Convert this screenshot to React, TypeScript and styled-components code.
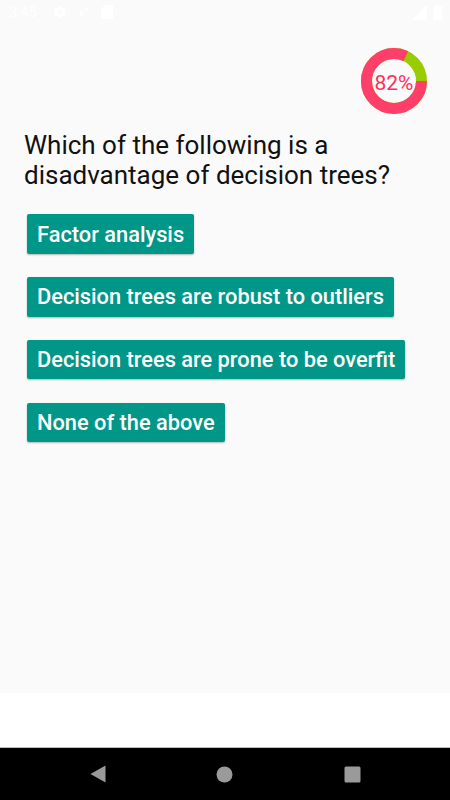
import React from "react";
import styled, { createGlobalStyle } from "styled-components";

const GlobalStyle = createGlobalStyle`
  html, body { margin: 0; padding: 0; }
  body { font-family: Roboto, "Noto Sans", "Liberation Sans", sans-serif; background: #fafafa; }
  * { box-sizing: border-box; }
`;

const Screen = styled.div`
  width: 450px;
  height: 800px;
  display: flex;
  flex-direction: column;
  overflow: hidden;
  background: #fafafa;
`;

const StatusBar = styled.div`
  height: 24px;
  flex: 0 0 24px;
  display: flex;
  align-items: center;
  justify-content: space-between;
  padding: 0 8px 0 9px;
  background: #fafafa;
  color: #ffffff;
`;

const StatusGroup = styled.div<{ $gap: number }>`
  display: flex;
  align-items: center;
  gap: ${(p) => p.$gap}px;
`;

const Time = styled.span`
  font-family: Roboto, "Noto Sans", sans-serif;
  font-size: 14px;
  color: #ffffff;
  margin-right: 6px;
  letter-spacing: 0.2px;
`;

const Content = styled.main`
  flex: 1;
  display: flex;
  flex-direction: column;
  padding: 24px 23px 0 24px;
  background: #fafafa;
`;

const Header = styled.div`
  display: flex;
  justify-content: flex-end;
`;

const Ring = styled.div`
  width: 66px;
  height: 66px;
  display: grid;
  place-items: center;
  & > * { grid-area: 1 / 1; }
`;

const RingLabel = styled.span`
  font-family: Roboto, "Noto Sans", sans-serif;
  font-size: 21px;
  color: #ff2f5c;
  padding-top: 3px;
`;

const Question = styled.h1`
  margin: 16px 0 0 0;
  font-family: Roboto, "Noto Sans", sans-serif;
  font-weight: 400;
  font-size: 26px;
  line-height: 30px;
  color: #111111;
`;

const Options = styled.div`
  display: flex;
  flex-direction: column;
  align-items: flex-start;
  gap: 23.3px;
  margin-top: 24.3px;
  padding-left: 3px;
`;

const OptionButton = styled.button`
  height: 39.5px;
  padding: 0 10px;
  border: none;
  border-radius: 2px;
  background: #009688;
  color: #ffffff;
  font-family: Roboto, "Noto Sans", sans-serif;
  font-weight: 500;
  font-size: 21.8px;
  white-space: nowrap;
  box-shadow: 0 1px 2px rgba(0, 0, 0, 0.28);
  cursor: pointer;
`;

const Spacer = styled.div`
  height: 55px;
  flex: 0 0 55px;
  background: #ffffff;
  border-bottom: 1px solid #bdbdbd;
`;

const NavBar = styled.nav`
  height: 52px;
  flex: 0 0 52px;
  background: #000000;
  display: grid;
  grid-template-columns: repeat(3, 1fr);
  align-items: center;
  justify-items: center;
  padding: 0 34px;
`;

const NavIcon = styled.svg`
  display: block;
`;

const options = [
  "Factor analysis",
  "Decision trees are robust to outliers",
  "Decision trees are prone to be overfit",
  "None of the above",
];

function ProgressRing({ value }: { value: number }) {
  const r = 27.5;
  const c = 2 * Math.PI * r;
  const pink = (value / 100) * c;
  return (
    <Ring>
      <svg width="66" height="66" viewBox="0 0 66 66">
        <circle cx="33" cy="33" r={r} fill="none" stroke="#99cc00" strokeWidth="11" />
        <circle
          cx="33"
          cy="33"
          r={r}
          fill="none"
          stroke="#ff3f69"
          strokeWidth="11"
          strokeDasharray={`${pink} ${c}`}
        />
      </svg>
      <RingLabel>{value}%</RingLabel>
    </Ring>
  );
}

export default function App() {
  return (
    <>
      <GlobalStyle />
      <Screen>
        <StatusBar>
          <StatusGroup $gap={10}>
            <Time>3:45</Time>
            <svg width="14" height="14" viewBox="0 0 24 24" fill="#fff">
              <path d="M19.4 13c.04-.33.06-.66.06-1s-.02-.67-.06-1l2.1-1.65c.2-.15.25-.42.12-.64l-2-3.46c-.12-.22-.39-.3-.61-.22l-2.49 1c-.52-.4-1.08-.73-1.69-.98l-.38-2.65A.49.49 0 0 0 14 2h-4c-.25 0-.46.18-.49.42l-.38 2.65c-.61.25-1.17.59-1.69.98l-2.49-1a.5.5 0 0 0-.61.22l-2 3.46c-.13.22-.07.49.12.64L4.57 11c-.04.33-.07.67-.07 1s.03.67.07 1l-2.11 1.65c-.19.15-.24.42-.12.64l2 3.46c.12.22.39.3.61.22l2.49-1c.52.4 1.08.73 1.69.98l.38 2.65c.03.24.24.42.49.42h4c.25 0 .46-.18.49-.42l.38-2.65c.61-.25 1.17-.59 1.69-.98l2.49 1c.23.09.49 0 .61-.22l2-3.46c.12-.22.07-.49-.12-.64L19.4 13zM12 15.5a3.5 3.5 0 1 1 0-7 3.5 3.5 0 0 1 0 7z" />
            </svg>
            <svg width="14" height="14" viewBox="0 0 24 24" fill="#fff">
              <path d="M9 14.5a3 3 0 1 0 0-.01zM9 9l1 .2.5 1.6 1.4.7 1.5-.6 1 1.4-1 1.2v1.6l1 1.2-1 1.4-1.5-.6-1.4.7-.5 1.6H8l-.5-1.6-1.4-.7-1.5.6-1-1.4 1-1.2v-1.6l-1-1.2 1-1.4 1.5.6 1.4-.7L8 9z" />
              <path d="M13 4h10l-5 6z" />
            </svg>
            <svg width="12" height="14" viewBox="0 0 12 14" fill="#fff">
              <path d="M4 0h6.5c.8 0 1.5.7 1.5 1.5v11c0 .8-.7 1.5-1.5 1.5h-9C.7 14 0 13.3 0 12.5V4z" />
            </svg>
          </StatusGroup>
          <StatusGroup $gap={6}>
            <svg width="15" height="15" viewBox="0 0 15 15" fill="#fff">
              <path d="M15 0v15H0z" />
            </svg>
            <svg width="9" height="15" viewBox="0 0 9 15" fill="#fff">
              <path d="M2.5 0h4v1.5H8c.6 0 1 .4 1 1V14c0 .6-.4 1-1 1H1c-.6 0-1-.4-1-1V2.5c0-.6.4-1 1-1h1.5z" />
            </svg>
          </StatusGroup>
        </StatusBar>
        <Content>
          <Header>
            <ProgressRing value={82} />
          </Header>
          <Question>
            Which of the following is a
            <br />
            disadvantage of decision trees?
          </Question>
          <Options>
            {options.map((o) => (
              <OptionButton key={o}>{o}</OptionButton>
            ))}
          </Options>
        </Content>
        <Spacer />
        <NavBar>
          <NavIcon width="16" height="18" viewBox="0 0 16 18">
            <path d="M15.5 0.5v17L0.5 9z" fill="#9a9a9a" />
          </NavIcon>
          <NavIcon width="17" height="17" viewBox="0 0 17 17">
            <circle cx="8.5" cy="8.5" r="8" fill="#9a9a9a" />
          </NavIcon>
          <NavIcon width="17" height="17" viewBox="0 0 17 17">
            <rect x="0.5" y="0.5" width="16" height="16" rx="1.5" fill="#9a9a9a" />
          </NavIcon>
        </NavBar>
      </Screen>
    </>
  );
}
